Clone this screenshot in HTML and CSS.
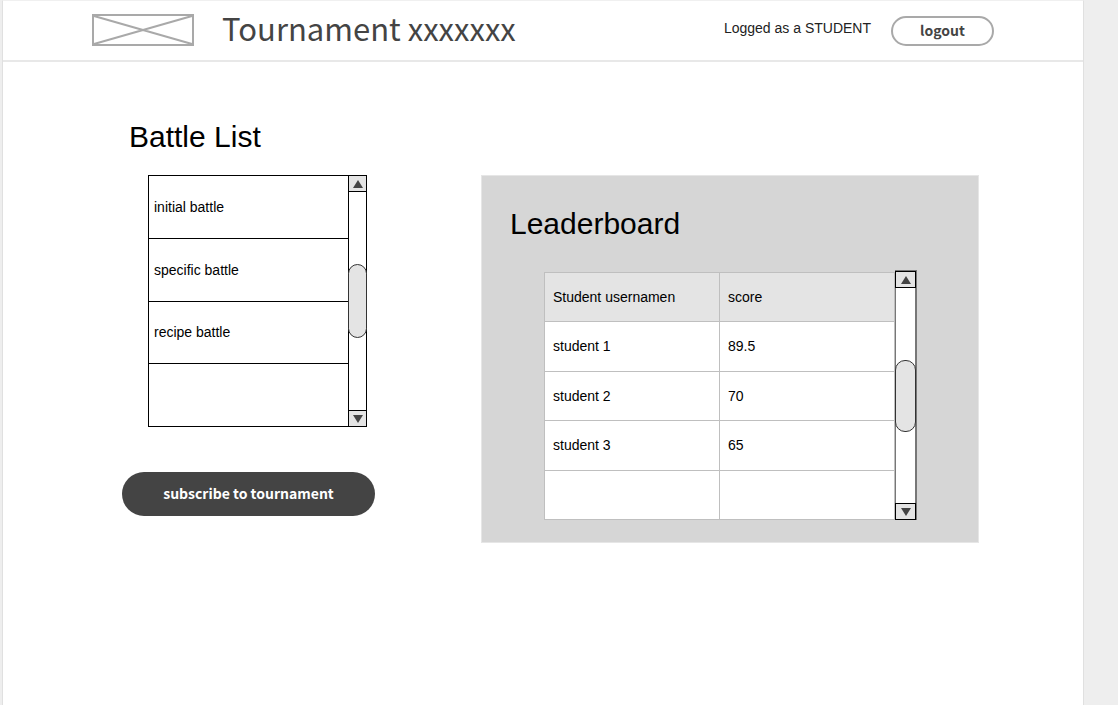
FILE: index.html
```html
<!DOCTYPE html>
<html lang="en">
<head>
<meta charset="utf-8">
<title>Tournament</title>
<link rel="stylesheet" href="styles.css">
</head>
<body>
<div class="page">
  <header class="header">
    <svg class="logo" viewBox="0 0 102 32" aria-hidden="true">
      <path d="M2 2L100 30M2 30L100 2" fill="none" stroke="#a9a9a9" stroke-width="2"/>
      <rect x="1" y="1" width="100" height="30" fill="none" stroke="#a9a9a9" stroke-width="2"/>
    </svg>
    <h1 class="title">Tournament xxxxxxx</h1>
    <span class="user">Logged as a STUDENT</span>
    <button class="logout" type="button">logout</button>
  </header>
  <main class="main">
    <section class="battles">
      <h2 class="heading">Battle List</h2>
      <div class="list-box">
        <ul class="list">
          <li class="item">initial battle</li>
          <li class="item">specific battle</li>
          <li class="item">recipe battle</li>
          <li class="item"></li>
        </ul>
        <div class="scrollbar">
          <button class="arrow" type="button" aria-label="Scroll up"><svg width="10" height="8" viewBox="0 0 10 8"><path d="M5 0L10 8H0Z" fill="#444"/></svg></button>
          <div class="thumb"></div>
          <button class="arrow arrow-down" type="button" aria-label="Scroll down"><svg width="10" height="8" viewBox="0 0 10 8"><path d="M0 0H10L5 8Z" fill="#444"/></svg></button>
        </div>
      </div>
      <button class="subscribe" type="button">subscribe to tournament</button>
    </section>
    <section class="panel">
      <h2 class="heading">Leaderboard</h2>
      <div class="board">
        <div class="table-wrap">
          <table class="table">
            <thead><tr><th>Student usernamen</th><th>score</th></tr></thead>
            <tbody>
              <tr><td>student 1</td><td>89.5</td></tr>
              <tr><td>student 2</td><td>70</td></tr>
              <tr><td>student 3</td><td>65</td></tr>
              <tr><td></td><td></td></tr>
            </tbody>
          </table>
        </div>
        <div class="scrollbar scrollbar-board">
          <button class="arrow" type="button" aria-label="Scroll up"><svg width="10" height="8" viewBox="0 0 10 8"><path d="M5 0L10 8H0Z" fill="#444"/></svg></button>
          <div class="thumb"></div>
          <button class="arrow arrow-down" type="button" aria-label="Scroll down"><svg width="10" height="8" viewBox="0 0 10 8"><path d="M0 0H10L5 8Z" fill="#444"/></svg></button>
        </div>
      </div>
    </section>
  </main>
</div>
</body>
</html>
```

FILE: styles.css
```css
* {
  box-sizing: border-box;
}

body {
  margin: 0;
  background: #eee;
  color: #000;
  font: 14px/20px "Liberation Sans", Arial, sans-serif;
}

.page {
  min-height: 100vh;
  margin: 0 34px 0 2px;
  border: 1px solid #e0e0e0;
  border-top-color: #f0f0f0;
  border-bottom: 0;
  background: #fff;
}

.header {
  display: flex;
  align-items: center;
  height: 61px;
  padding: 0 89px;
  border-bottom: 2px solid #e8e8e8;
}

.logo {
  flex: none;
  width: 102px;
  height: 32px;
  margin-bottom: 2px;
}

.title {
  flex: 1;
  margin: 0 0 0 28px;
  padding-bottom: 6px;
  color: #444;
  font: 400 31px/48px "Noto Sans CJK SC", sans-serif;
}

.user {
  padding-bottom: 6px;
  color: #222;
}

.logout,
.subscribe {
  padding: 0 0 2px;
  border-radius: 22px;
  font: 700 14px/20px "Noto Sans CJK SC", sans-serif;
}

.logout {
  width: 103px;
  height: 30px;
  margin-left: 20px;
  border: 2px solid #a9a9a9;
  background: #fff;
  color: #444;
}

.main {
  display: flex;
  align-items: flex-start;
  gap: 106px;
  padding: 58px 104px 40px 119px;
}

.battles {
  display: flex;
  flex: none;
  flex-direction: column;
  width: 253px;
}

.heading {
  margin: 0;
  font-weight: 400;
  font-size: 30px;
  line-height: 34px;
}

.battles .heading {
  margin-left: 7px;
}

.list-box {
  display: flex;
  width: 219px;
  height: 252px;
  margin: 21px 0 45px 26px;
  border: 1px solid #000;
}

.list {
  display: flex;
  flex: 1;
  flex-direction: column;
  margin: 0;
  padding: 0;
  list-style: none;
}

.item {
  display: flex;
  flex: 1;
  align-items: center;
  padding: 0 5px;
  border-bottom: 1px solid #000;
}

.item:last-child {
  border-bottom: 0;
}

.scrollbar {
  display: flex;
  flex: none;
  flex-direction: column;
  justify-content: space-between;
  width: 18px;
  border-left: 1px solid #000;
}

.arrow {
  display: grid;
  place-items: center;
  height: 16px;
  padding: 0;
  border: 0 solid #000;
  border-bottom-width: 1px;
  background: #e4e4e4;
}

.arrow-down {
  border-width: 1px 0 0;
}

.thumb {
  height: 74px;
  margin: 0 -1px;
  border: 1px solid #333;
  border-radius: 10px;
  background: #e4e4e4;
}

.subscribe {
  height: 44px;
  border: 0;
  background: #444;
  color: #fff;
}

.panel {
  flex: 1;
  margin-top: 55px;
  padding: 31px 61px 22px 28px;
  border: 1px solid #e6e6e6;
  background: #d6d6d6;
}

.board {
  display: flex;
  margin: 29px 0 0 34px;
}

.table-wrap {
  flex: 1;
  padding-top: 2px;
}

.table {
  width: 100%;
  height: 248px;
  border-collapse: collapse;
  table-layout: fixed;
  background: #fff;
}

.table th,
.table td {
  height: 49px;
  padding: 0 8px;
  border: 1px solid #bfbfbf;
  font-weight: 400;
  text-align: left;
}

.table th {
  background: #e4e4e4;
}

.scrollbar-board {
  width: 22px;
  border: 0 solid #777;
  border-width: 1px 2px 0 1px;
  background: #fff;
}

.scrollbar-board .arrow {
  height: 17px;
  margin: 0 -1px;
  border-width: 1px;
}

.scrollbar-board .thumb {
  height: 72px;
}
```
